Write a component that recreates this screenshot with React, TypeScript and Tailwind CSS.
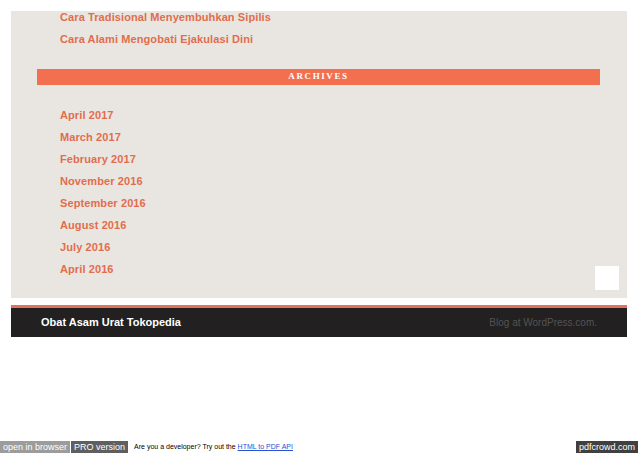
import React from 'react';

const recent = ['Cara Tradisional Menyembuhkan Sipilis', 'Cara Alami Mengobati Ejakulasi Dini'];
const archives = [
  'April 2017',
  'March 2017',
  'February 2017',
  'November 2016',
  'September 2016',
  'August 2016',
  'July 2016',
  'April 2016',
];

const linkCls = "block h-[22px] leading-[22px] text-[11px] font-bold text-[#e26d4d] tracking-[0.1px]";

export default function App() {
  return (
    <div className="relative w-[638px] h-[453px] bg-white overflow-hidden pt-[11px] font-['Liberation_Sans',Arial,sans-serif]">
      {/* widget area */}
      <div className="ml-[11px] w-[616px] h-[287px] bg-[#e9e6e1] relative flex flex-col">
        <ul className="pl-[49px] -mt-[5px]">
          {recent.map((t) => (
            <li key={t} className={linkCls}>{t}</li>
          ))}
        </ul>
        <div className="mt-[19px] ml-[26px] w-[563px] h-[16px] bg-[#f26f50] flex items-center justify-center">
          <span className="text-white text-[9px] font-bold tracking-[1.6px] font-['Liberation_Serif','Times_New_Roman',serif]">
            ARCHIVES
          </span>
        </div>
        <ul className="pl-[49px] mt-[19px]">
          {archives.map((t) => (
            <li key={t} className={linkCls}>{t}</li>
          ))}
        </ul>
        <div className="absolute right-[8px] bottom-[8px] w-[24px] h-[24px] bg-white" />
      </div>

      {/* footer */}
      <div className="mt-[7px] ml-[11px] w-[616px] h-[32px] bg-[#222020] border-t-[3px] border-[#e0735a] flex items-center justify-between pl-[30px] pr-[30px]">
        <span className="text-white text-[11px] font-bold">Obat Asam Urat Tokopedia</span>
        <span className="text-[#555353] text-[10px]">Blog at WordPress.com.</span>
      </div>

      {/* pdfcrowd bar */}
      <div className="absolute left-0 bottom-0 w-full h-[12px] flex items-center text-[9px] leading-[12px] font-['Liberation_Sans',Arial,sans-serif]">
        <span className="bg-[#9c9c9c] text-white px-[3px] h-[12px]">open in browser</span>
        <span className="bg-[#5f5f5f] text-white px-[3px] h-[12px] ml-[1px]">PRO version</span>
        <span className="ml-[6px] text-[7px] text-black">
          Are you a developer? Try out the <span className="text-[#2b4fd6] underline">HTML to PDF API</span>
        </span>
        <span className="ml-auto bg-[#404040] text-white px-[3px] h-[12px]">pdfcrowd.com</span>
      </div>
    </div>
  );
}
